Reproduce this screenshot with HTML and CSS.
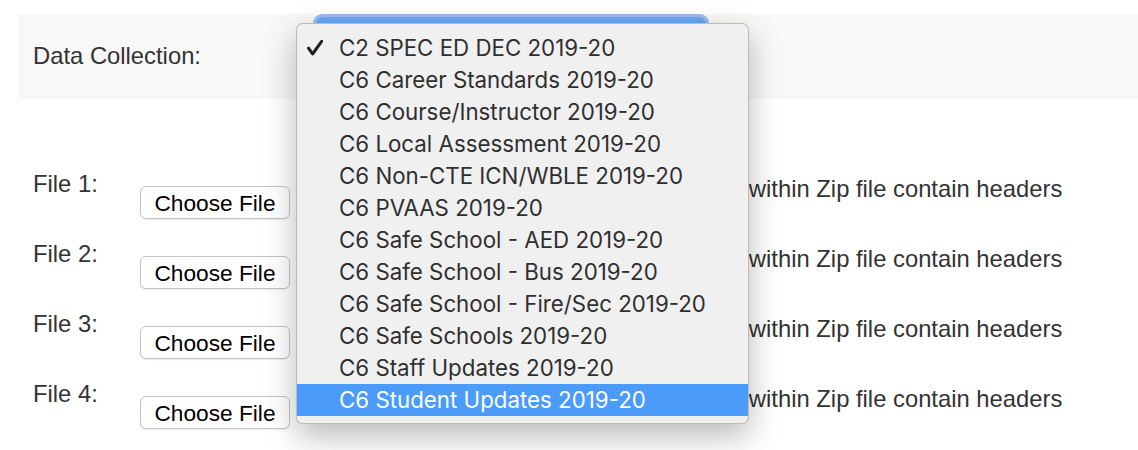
FILE: index.html
```html
<!DOCTYPE html>
<html lang="en">
<head>
<meta charset="utf-8">
<title>Upload</title>
<link rel="stylesheet" href="styles.css">
</head>
<body>
<div class="page">
  <div class="panel">
    <span class="panel-label">Data Collection:</span>
    <div class="select"></div>
  </div>

  <div class="files">
    <div class="row">
      <span class="file-label">File 1:</span>
      <span class="choose">Choose File</span>
      <span class="nofile"></span>
      <span class="headers"><span class="box"></span>Files within Zip file contain headers</span>
    </div>
    <div class="row">
      <span class="file-label">File 2:</span>
      <span class="choose">Choose File</span>
      <span class="nofile"></span>
      <span class="headers"><span class="box"></span>Files within Zip file contain headers</span>
    </div>
    <div class="row">
      <span class="file-label">File 3:</span>
      <span class="choose">Choose File</span>
      <span class="nofile"></span>
      <span class="headers"><span class="box"></span>Files within Zip file contain headers</span>
    </div>
    <div class="row">
      <span class="file-label">File 4:</span>
      <span class="choose">Choose File</span>
      <span class="nofile"></span>
      <span class="headers"><span class="box"></span>Files within Zip file contain headers</span>
    </div>
  </div>
</div>

<ul class="menu">
  <li class="item checked"><svg class="check" width="16" height="16" viewBox="0 0 16 16"><path d="M1.5 8.2 L5.6 14 L14.8 1.2" fill="none" stroke="#1f1f1f" stroke-width="3" stroke-linecap="round" stroke-linejoin="round"/></svg>C2 SPEC ED DEC 2019-20</li>
  <li class="item">C6 Career Standards 2019-20</li>
  <li class="item">C6 Course/Instructor 2019-20</li>
  <li class="item">C6 Local Assessment 2019-20</li>
  <li class="item">C6 Non-CTE ICN/WBLE 2019-20</li>
  <li class="item">C6 PVAAS 2019-20</li>
  <li class="item">C6 Safe School - AED 2019-20</li>
  <li class="item">C6 Safe School - Bus 2019-20</li>
  <li class="item">C6 Safe School - Fire/Sec 2019-20</li>
  <li class="item">C6 Safe Schools 2019-20</li>
  <li class="item">C6 Staff Updates 2019-20</li>
  <li class="item active">C6 Student Updates 2019-20</li>
</ul>
</body>
</html>
```
FILE: styles.css
```css
* { box-sizing: border-box; }

body {
  margin: 0;
  background: #ffffff;
  font-family: "Liberation Sans", Arial, sans-serif;
  font-size: 23.8px;
  color: #333333;
}

.page {
  padding: 14px 0 0 18px;
}

.panel {
  height: 85px;
  background: #f8f8f7;
  display: flex;
  align-items: center;
  padding-left: 15px;
}

.panel-label {
  width: 283px;
  line-height: 28px;
  margin-top: -2px;
}

.select {
  align-self: flex-start;
  margin-top: 3px;
  width: 390px;
  height: 40px;
  border-radius: 6px;
  background: linear-gradient(#6aaaf6, #3b8cf2);
  box-shadow: 0 0 0 3px rgba(120, 170, 240, 0.75);
}

.files {
  margin-top: 71px;
  padding-left: 15px;
}

.row {
  height: 70px;
  display: grid;
  grid-template-columns: 107px 150px 378px auto;
  align-items: start;
  line-height: 28px;
}

.choose {
  margin-top: 16px;
  height: 33px;
  border: 1px solid #c4c4c4;
  border-radius: 6px;
  background: #ffffff;
  box-shadow: 0 1px 1px rgba(0, 0, 0, 0.08);
  color: #000;
  font-size: 22.7px;
  line-height: 33px;
  text-align: center;
}

.headers {
  margin-top: 5px;
  display: flex;
  align-items: center;
  white-space: nowrap;
}

.box {
  width: 14px;
  height: 14px;
  margin-right: 10px;
  border: 1px solid #999;
  border-radius: 3px;
  background: #fff;
}

.menu {
  position: absolute;
  left: 296px;
  top: 23px;
  width: 453px;
  height: 401px;
  margin: 0;
  padding: 8px 0 0;
  list-style: none;
  background: #f0f0f0;
  border: 1px solid rgba(0, 0, 0, 0.22);
  border-radius: 7px;
  box-shadow: 0 12px 32px rgba(0, 0, 0, 0.28);
  font-family: Inter, "Liberation Sans", sans-serif;
  font-size: 22.3px;
  color: #2f2f2f;
}

.item {
  position: relative;
  height: 32px;
  line-height: 31px;
  padding-left: 42px;
  white-space: nowrap;
}

.item.active {
  background: #4b9bfa;
  color: #ffffff;
}

.check {
  position: absolute;
  left: 10px;
  top: 8px;
}
```
